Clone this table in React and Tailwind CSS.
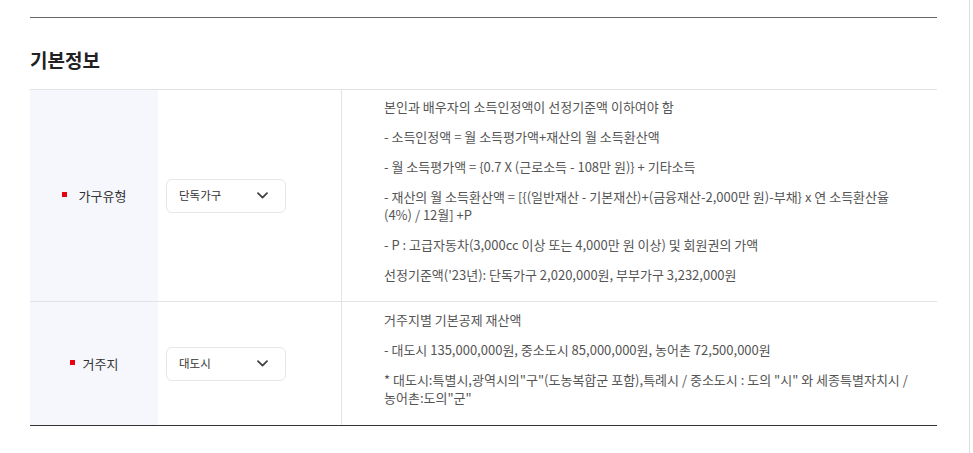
import React from 'react'

const font = { fontFamily: '"Noto Sans CJK KR", "Noto Sans", sans-serif' }

function Chevron() {
  return (
    <svg width="11" height="7" viewBox="0 0 11 7" fill="none">
      <path d="M1 1.2 L5.5 5.6 L10 1.2" stroke="#444" strokeWidth="1.8" strokeLinecap="round" strokeLinejoin="round" />
    </svg>
  )
}

function Select({ value }) {
  return (
    <div className="flex items-center justify-between w-[120px] h-[34px] pl-3 pr-[17px] bg-white border border-[#e6e6e6] rounded-md">
      <span className="text-[11.5px] text-[#333]">{value}</span>
      <Chevron />
    </div>
  )
}

function Label({ text, gap }) {
  return (
    <div className="flex items-center justify-center bg-[#f5f7fc]">
      <div className={`flex items-start ${gap}`}>
        <span className="mt-[6px] w-[5px] h-[5px] bg-[#e60012]"></span>
        <span className="text-[13px] text-[#333]">{text}</span>
      </div>
    </div>
  )
}

function Desc({ lines, className }) {
  return (
    <div className={`pl-[42px] pr-6 text-[13px] leading-[18px] text-[#555] flex flex-col gap-3 ${className}`}>
      {lines.map((l, i) => (
        <p key={i}>{l}</p>
      ))}
    </div>
  )
}

export default function App() {
  const row1 = [
    '본인과 배우자의 소득인정액이 선정기준액 이하여야 함',
    '- 소득인정액 = 월 소득평가액+재산의 월 소득환산액',
    '- 월 소득평가액 = {0.7 X (근로소득 - 108만 원)} + 기타소득',
    <>{'- 재산의 월 소득환산액 = [{(일반재산 - 기본재산)+(금융재산-2,000만 원)-부채} x 연 소득환산율'}<br />{'(4%) / 12월] +P'}</>,
    '- P : 고급자동차(3,000cc 이상 또는 4,000만 원 이상) 및 회원권의 가액',
    "선정기준액('23년): 단독가구 2,020,000원, 부부가구 3,232,000원",
  ]
  const row2 = [
    '거주지별 기본공제 재산액',
    '- 대도시 135,000,000원, 중소도시 85,000,000원, 농어촌 72,500,000원',
    <>{'* 대도시:특별시,광역시의"구"(도농복합군 포함),특례시 / 중소도시 : 도의 "시" 와 세종특별자치시 /'}<br />{'농어촌:도의"군"'}</>,
  ]

  return (
    <div className="w-[973px] h-[453px] bg-white" style={font}>
      <div className="w-[970px] h-full border-r border-[#dcdcdc] pl-[30px]">
        <div className="w-[907px]">
          <div className="h-[17px]"></div>
          <div className="border-t border-[#666]"></div>
          <h2 className="mt-[29px] text-[19px] leading-[26px] font-bold text-[#222]">기본정보</h2>
          <div className="mt-[16px] border-t border-[#e3e3e3] border-b border-b-[#333]">
            <div className="grid grid-cols-[128px_184px_1fr]">
              <Label text="가구유형" gap="gap-3" />
              <div className="flex items-center pl-2 border-r border-[#e3e3e3]">
                <Select value="단독가구" />
              </div>
              <Desc lines={row1} className="pt-2 pb-[17px]" />
            </div>
            <div className="grid grid-cols-[128px_184px_1fr] border-t border-[#e3e3e3]">
              <Label text="거주지" gap="gap-2" />
              <div className="flex items-center pl-2 border-r border-[#e3e3e3]">
                <Select value="대도시" />
              </div>
              <Desc lines={row2} className="pt-[9px] pb-[18px]" />
            </div>
          </div>
        </div>
      </div>
    </div>
  )
}
